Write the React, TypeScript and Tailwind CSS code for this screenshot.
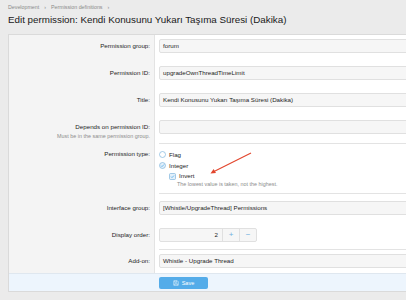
import React from "react";

const font = { fontFamily: '"Liberation Sans", Arial, sans-serif' };

function Radio({ checked }: { checked?: boolean }) {
  return (
    <svg width="7" height="7" viewBox="0 0 14 14" className="shrink-0">
      <circle cx="7" cy="7" r="6" fill={checked ? "#e3f0fa" : "#fff"} stroke="#7fb4dc" strokeWidth="1.4" />
      {checked && <path d="M4 7.2l2 2 4-4.2" fill="none" stroke="#47a7eb" strokeWidth="1.5" />}
    </svg>
  );
}

function Check() {
  return (
    <svg width="7" height="7" viewBox="0 0 14 14" className="shrink-0">
      <rect x="1" y="1" width="12" height="12" rx="2" fill="#e3f0fa" stroke="#7fb4dc" strokeWidth="1.4" />
      <path d="M4 7.2l2 2 4-4.2" fill="none" stroke="#47a7eb" strokeWidth="1.5" />
    </svg>
  );
}

function Input({ value }: { value?: string }) {
  return (
    <div className="h-[14px] w-full rounded-[2px] border border-[#e0e0e0] bg-[#f6f6f6] pl-[3px] text-[6.2px] leading-[12px] text-[#1d1d1d] whitespace-nowrap">
      {value}
    </div>
  );
}

function Row({
  label,
  hint,
  children,
  className = "",
  labelPt = "pt-[4px]",
}: {
  label: string;
  hint?: string;
  children: React.ReactNode;
  className?: string;
  labelPt?: string;
}) {
  return (
    <div className="flex">
      <div className={`w-[146px] shrink-0 border-r border-[#e3e3e3] bg-[#f4f4f4] pr-[4px] text-right ${labelPt}`}>
        <div className="text-[6.2px] leading-[14px] text-[#1d1d1d]">{label}</div>
        {hint && <div className="-mt-[1px] text-[5.4px] leading-[6px] text-[#8c8c8c]">{hint}</div>}
      </div>
      <div className={`flex-1 pl-[4px] ${className}`}>{children}</div>
    </div>
  );
}

export default function App() {
  return (
    <div className="relative h-[300px] w-[406px] overflow-hidden bg-[#ebebeb]" style={font}>
      {/* Header */}
      <div className="px-[8px] pt-[3px]">
        <div className="flex items-center gap-[5px] text-[5.3px] leading-[8px] text-[#8a8a8a]">
          <span>Development</span>
          <span>›</span>
          <span>Permission definitions</span>
          <span>›</span>
        </div>
        <h1 className="mt-[3px] text-[9.8px] leading-[12px] text-[#1a1a1a]">
          Edit permission: Kendi Konusunu Yukarı Taşıma Süresi (Dakika)
        </h1>
      </div>

      {/* Form card */}
      <div className="ml-[8px] mt-[8px] w-[420px] border border-[#dadada] bg-white">
        <Row label="Permission group:" className="pt-[4px] pb-[9px]">
          <Input value="forum" />
        </Row>
        <Row label="Permission ID:" className="pt-[4px] pb-[9px]">
          <Input value="upgradeOwnThreadTimeLimit" />
        </Row>
        <Row label="Title:" className="pt-[4px] pb-[9px]">
          <Input value="Kendi Konusunu Yukarı Taşıma Süresi (Dakika)" />
        </Row>
        <Row
          label="Depends on permission ID:"
          hint="Must be in the same permission group."
          className="pt-[4px] pb-[9px]"
        >
          <Input />
        </Row>
        <Row label="Permission type:" labelPt="pt-[4px]" className="pt-0">
          <div className="border-t border-[#e3e3e3] pt-[5px] pb-[6px] text-[6.2px] text-[#1d1d1d]">
            <div className="flex h-[11px] items-center gap-[3px]">
              <Radio />
              <span>Flag</span>
            </div>
            <div className="flex h-[11px] items-center gap-[3px]">
              <Radio checked />
              <span>Integer</span>
            </div>
            <div className="flex h-[10px] items-center gap-[3px] pl-[10px]">
              <Check />
              <span>Invert</span>
            </div>
            <div className="h-[6px] pl-[18px] text-[5.4px] leading-[6px] text-[#8c8c8c]">
              The lowest value is taken, not the highest.
            </div>
          </div>
        </Row>
        <Row label="Interface group:" labelPt="pt-[8px]">
          <div className="border-t border-[#e3e3e3] pt-[7px] pb-[9px]">
            <Input value="[Whistle/UpgradeThread] Permissions" />
          </div>
        </Row>
        <Row label="Display order:" className="pt-[4px] pb-[7px]">
          <div className="flex h-[14px] w-[98px] rounded-[2px] border border-[#e0e0e0] bg-[#f6f6f6] text-[6.2px] leading-[12px]">
            <div className="flex-1 pr-[4px] text-right text-[#1d1d1d]">2</div>
            <div className="w-[17px] border-l border-[#e0e0e0] text-center text-[8px] text-[#6fb0e0]">+</div>
            <div className="w-[17px] border-l border-[#e0e0e0] text-center text-[8px] text-[#6fb0e0]">−</div>
          </div>
        </Row>
        <Row label="Add-on:" labelPt="pt-[5px]">
          <div className="border-t border-[#e3e3e3] pt-[4px] pb-[5px]">
            <Input value="Whistle - Upgrade Thread" />
          </div>
        </Row>

        {/* Submit row */}
        <div className="flex border-t border-[#dfe7ef] bg-[#edf5fd] pt-[3px] pb-[2px] pl-[150px]">
          <button className="flex h-[12px] w-[49px] items-center justify-center gap-[3px] rounded-[2px] bg-[#54ace9] text-[5.6px] text-white">
            <svg width="6" height="6" viewBox="0 0 12 12">
              <path d="M1.5 1.5h7l2 2v7h-9z" fill="none" stroke="#fff" strokeWidth="1" />
              <path d="M3.5 1.5v3h4v-3M3.5 10.5v-3h5v3" fill="none" stroke="#fff" strokeWidth="1" />
            </svg>
            <span>Save</span>
          </button>
        </div>
      </div>

      {/* Annotation arrow */}
      <svg className="pointer-events-none absolute left-0 top-0" width="406" height="300">
        <line x1="251" y1="153" x2="213" y2="172" stroke="#e2452c" strokeWidth="1.1" />
        <path d="M210.5 173.5l5.5-0.4-2.4-4.2z" fill="#e2452c" />
      </svg>
    </div>
  );
}
